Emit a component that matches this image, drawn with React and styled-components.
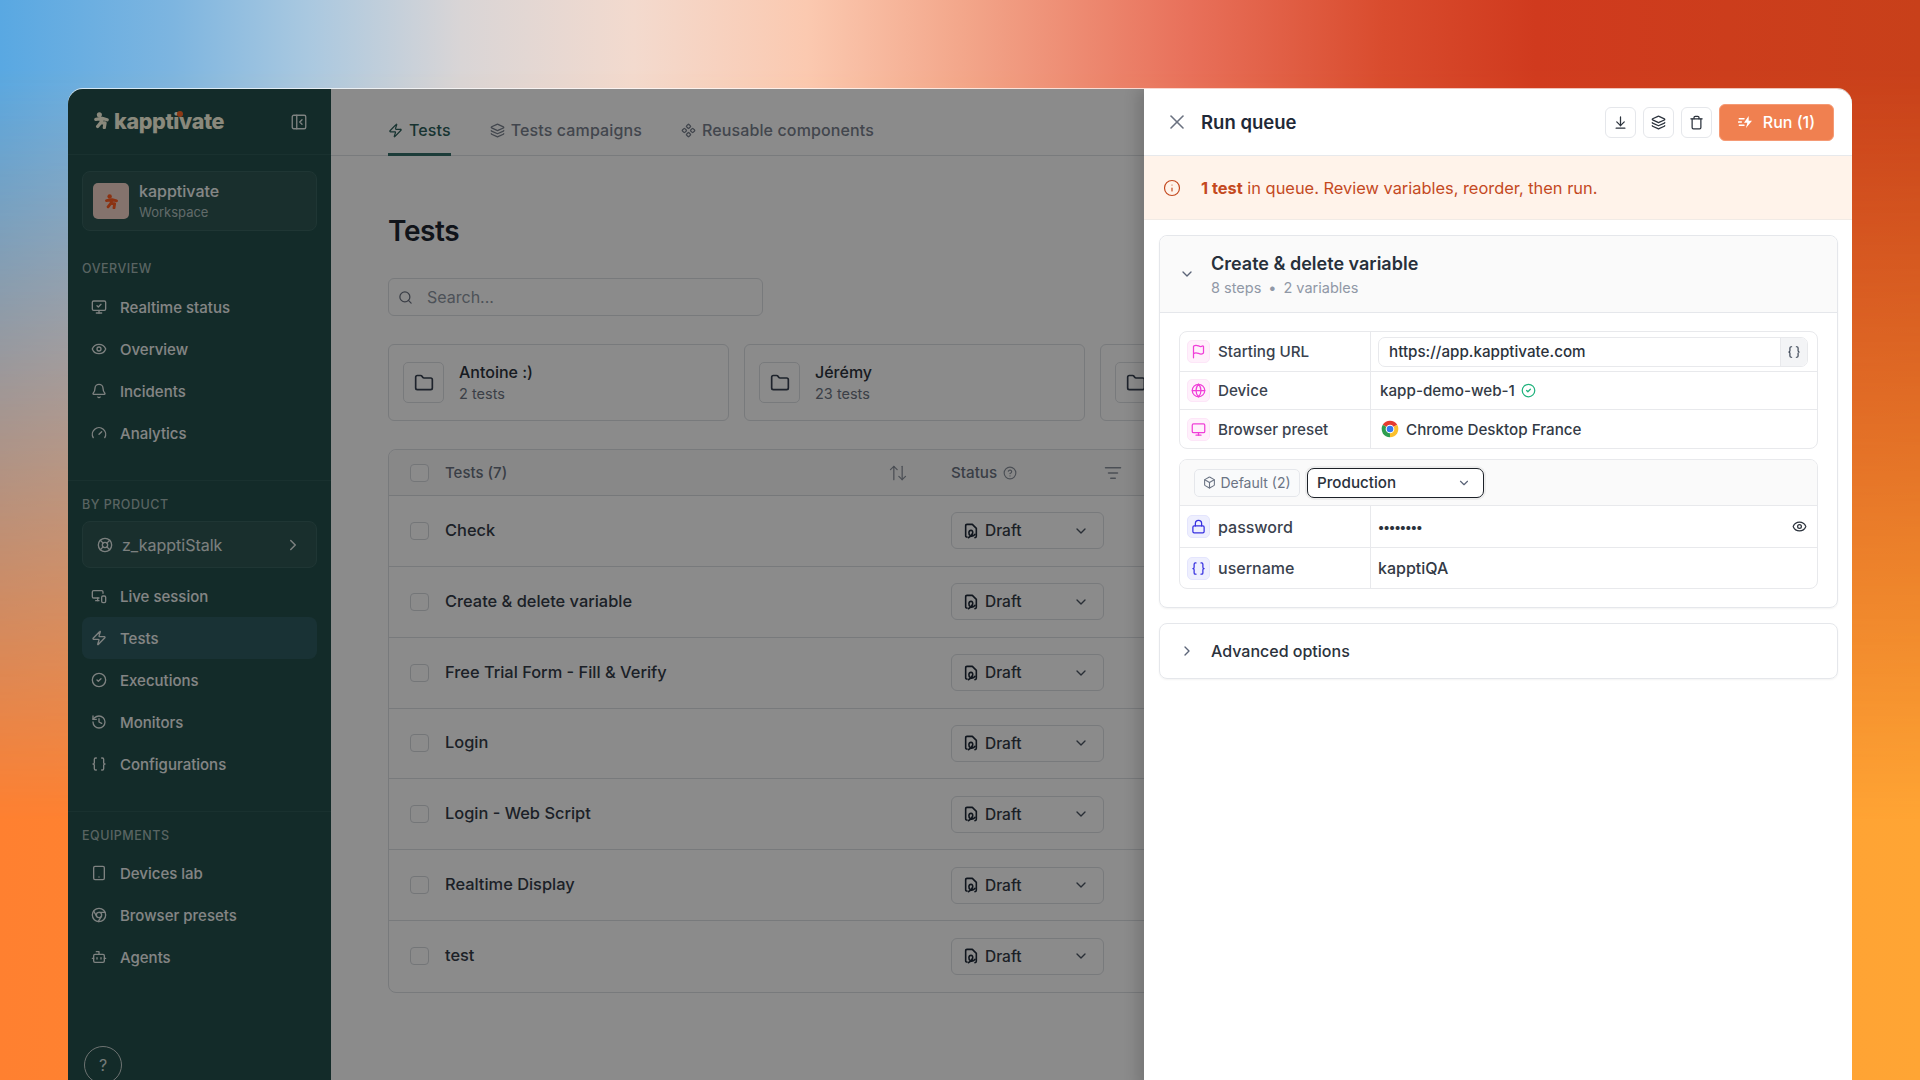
import React from 'react';
import styled, { createGlobalStyle } from 'styled-components';
import {
  ArrowDownToLine, ArrowUpDown, Bell, Bot, Box, Braces, ChevronDown, ChevronRight, Chrome, CircleCheck, CircleHelp,
  Component, Eye, Flag, Folder, Gauge, Globe, History, Info, Layers, LifeBuoy, ListFilter, Lock, Monitor, MonitorCheck,
  MonitorSmartphone, PanelLeftClose, Search, Tablet, Trash, X, Zap,
} from 'lucide-react';

const Global = createGlobalStyle`
  html, body { margin: 0; padding: 0; background: #ff8a30; }
  * { box-sizing: border-box; }
  body { font-family: Inter, "Noto Sans", "Liberation Sans", sans-serif; }
`;

const Stage = styled.div`
  position: relative;
  width: 1920px;
  height: 1080px;
  overflow: hidden;
  padding: 89px 68px 0;
  background: linear-gradient(90deg, #ff8030, #ffa534);
  &::before {
    content: '';
    position: absolute;
    inset: 0;
    background: linear-gradient(90deg, #59a8e2 0%, #7db5e0 9%, #a9c8e0 16%, #d9d5d6 24%, #f3dace 33%, #fbc9b0 42%, #f3a78b 50%, #e8705a 62%, #d94c2e 72%, #d03a1e 80%, #c8401a 100%);
    -webkit-mask-image: linear-gradient(180deg, #000 70px, transparent 820px);
    mask-image: linear-gradient(180deg, #000 70px, transparent 820px);
  }
`;

const Win = styled.div`
  position: relative;
  display: flex;
  height: 1000px;
  border-radius: 15px 15px 0 0;
  overflow: hidden;
  background: #fff;
  box-shadow: 0 -1px 0 rgba(255, 255, 255, 0.7);
`;

const Dim = styled.div`
  position: absolute;
  inset: 0;
  background: rgba(0, 0, 0, 0.455);
`;

const Side = styled.aside`
  width: 263px;
  flex: none;
  display: flex;
  flex-direction: column;
  background: #234f4b;
  color: #f0f4f3;
`;

const SideHead = styled.div`
  height: 66px;
  flex: none;
  display: flex;
  align-items: center;
  justify-content: space-between;
  padding: 0 23px 0 25px;
  border-bottom: 1px solid #2e5a56;
  color: #e8eeec;
`;

const Logo = styled.div`
  position: relative;
  display: flex;
  align-items: center;
  gap: 4px;
  font-weight: 800;
  font-size: 21.5px;
  line-height: 28px;
  letter-spacing: -0.35px;
  color: #fdfce4;
  padding-bottom: 2px;
`;

const LogoDot = styled.span`
  position: absolute;
  left: 84px;
  top: 4px;
  width: 6px;
  height: 6px;
  border-radius: 50%;
  background: #ff6a28;
`;

const SideBlock = styled.div`
  padding: 0 14px;
  flex: none;
  ${p => p.$rule && 'border-top: 1px solid #2e5a56;'}
  ${p => p.$rule && 'margin-top: 26px; padding-top: 16px;'}
`;

const Workspace = styled.div`
  margin-top: 16px;
  height: 60px;
  display: flex;
  align-items: center;
  gap: 10px;
  padding: 0 10px;
  background: #2f5754;
  border: 1px solid #3a6360;
  border-radius: 8px;
`;

const Avatar = styled.div`
  width: 36px;
  height: 36px;
  border-radius: 5px;
  background: #f2d4c8;
  display: flex;
  align-items: center;
  justify-content: center;
`;

const WsText = styled.div`
  display: flex;
  flex-direction: column;
  gap: 3px;
`;
const WsName = styled.div`
  font-size: 16px;
  line-height: 19px;
  font-weight: 500;
  color: #f4f7f6;
`;
const WsSub = styled.div`
  font-size: 13px;
  line-height: 16px;
  color: #b3c3c1;
`;

const SectionLabel = styled.div`
  font-size: 12.5px;
  line-height: 16px;
  font-weight: 500;
  letter-spacing: 0.5px;
  text-transform: uppercase;
  color: #a3b8b5;
  margin: ${p => p.$top || 0}px 0 ${p => p.$bottom || 8}px;
`;

const NavItem = styled.div`
  height: 42px;
  display: flex;
  align-items: center;
  gap: 13px;
  padding: 0 9px;
  border-radius: 8px;
  font-size: 15px;
  font-weight: 500;
  color: #f2f5f4;
  background: ${p => (p.$active ? '#2f5c61' : 'transparent')};
  svg { flex: none; color: #e8eeec; }
`;

const Product = styled.div`
  height: 47px;
  margin-bottom: 7px;
  display: flex;
  align-items: center;
  padding: 0 14px;
  gap: 9px;
  background: #2f5754;
  border: 1px solid #3a6360;
  border-radius: 8px;
  font-size: 16px;
  color: #e4ebe9;
  span { flex: 1; }
`;

const Help = styled.div`
  margin: 68px 0 0 16px;
  width: 38px;
  height: 38px;
  flex: none;
  border-radius: 50%;
  border: 1px solid #c9d3d1;
  display: flex;
  align-items: center;
  justify-content: center;
  font-size: 16px;
  color: #d8e0de;
`;

const Main = styled.main`
  flex: 1;
  min-width: 0;
  overflow: hidden;
  background: #fff;
`;

const Tabs = styled.div`
  height: 67px;
  display: flex;
  padding-left: 57px;
  gap: 39px;
  border-bottom: 1px solid #dfe2e6;
`;

const Tab = styled.div`
  display: flex;
  align-items: center;
  gap: 6px;
  height: 67px;
  font-size: 16px;
  font-weight: 500;
  letter-spacing: 0.12px;
  color: ${p => (p.$active ? '#2c5f5a' : '#79818e')};
  border-bottom: 3px solid ${p => (p.$active ? '#346f6a' : 'transparent')};
  padding-top: 18px;
`;

const Content = styled.div`
  padding-left: 57px;
  width: 1100px;
`;

const Title = styled.h1`
  margin: 58px 0 0;
  font-size: 28px;
  line-height: 34px;
  font-weight: 600;
  letter-spacing: -0.4px;
  color: #1f2630;
`;

const SearchBox = styled.div`
  margin-top: 30px;
  width: 375px;
  height: 38px;
  display: flex;
  align-items: center;
  gap: 14px;
  padding: 0 11px 0 9px;
  border: 1px solid #dde0e4;
  border-radius: 6px;
  font-size: 16px;
  color: #8e96a2;
  svg { color: #6b7280; }
`;

const Folders = styled.div`
  margin-top: 28px;
  display: flex;
  gap: 15px;
`;

const FolderCard = styled.div`
  width: 341px;
  height: 77px;
  flex: none;
  display: flex;
  align-items: center;
  gap: 15px;
  padding: 0 14px;
  border: 1px solid #dde0e4;
  border-radius: 6px;
`;

const FolderIcon = styled.div`
  width: 41px;
  height: 41px;
  flex: none;
  display: flex;
  align-items: center;
  justify-content: center;
  border: 1px solid #dde0e4;
  border-radius: 5px;
  color: #374151;
`;

const FolderName = styled.div`
  font-size: 16px;
  line-height: 20px;
  font-weight: 500;
  color: #2b323c;
`;
const FolderSub = styled.div`
  margin-top: 3px;
  font-size: 14.5px;
  line-height: 18px;
  color: #6d7582;
`;

const Table = styled.div`
  margin-top: 28px;
  width: 900px;
  border: 1px solid #dde0e4;
  border-radius: 8px;
`;

const Head = styled.div`
  height: 46px;
  display: grid;
  grid-template-columns: 19px 490px 171px;
  column-gap: 16px;
  align-items: center;
  padding-left: 21px;
  background: #fafafa;
  border-bottom: 1px solid #d9dce0;
  border-radius: 8px 8px 0 0;
  font-size: 15px;
  font-weight: 500;
  color: #6b7280;
`;

const HeadName = styled.div`
  display: flex;
  align-items: center;
  justify-content: space-between;
  padding-right: 27px;
`;

const HeadStatus = styled.div`
  display: flex;
  align-items: center;
  gap: 6px;
  font-size: 15.2px;
  span { flex: 1; }
`;

const Row = styled.div`
  height: 70.85px;
  display: grid;
  grid-template-columns: 19px 490px 153px;
  column-gap: 16px;
  align-items: center;
  padding-left: 21px;
  border-bottom: ${p => (p.$last ? 'none' : '1px solid #dde0e4')};
`;

const Check = styled.div`
  width: 19px;
  height: 18px;
  border: 1px solid #d5d8dd;
  border-radius: 4px;
  background: #fff;
`;

const RowName = styled.div`
  padding-bottom: 2px;
  font-size: 16.4px;
  font-weight: 500;
  color: #343c48;
`;

const Select = styled.div`
  height: 37px;
  display: flex;
  align-items: center;
  gap: 6px;
  padding: 0 14px 0 11px;
  border: 1px solid #dde0e4;
  border-radius: 6px;
  font-size: 15.5px;
  font-weight: 500;
  color: #343b46;
  span { flex: 1; }
`;

const Drawer = styled.section`
  position: absolute;
  top: 0;
  right: 0;
  bottom: 0;
  width: 708px;
  display: flex;
  flex-direction: column;
  background: #fff;
  box-shadow: -6px 0 14px rgba(0, 0, 0, 0.16);
`;

const DrawerHead = styled.header`
  height: 67px;
  flex: none;
  display: flex;
  align-items: center;
  padding: 0 18px 0 21px;
  border-bottom: 1px solid #e7e9ec;
`;

const CloseIcon = styled(X)`
  color: #6b7280;
  margin-right: 12px;
`;

const DrawerTitle = styled.h2`
  margin: 0;
  flex: 1;
  font-size: 18.5px;
  font-weight: 600;
  color: #1f2937;
`;

const IconBtn = styled.div`
  width: 31px;
  height: 31px;
  margin-right: 7px;
  display: flex;
  align-items: center;
  justify-content: center;
  border: 1px solid #e5e7eb;
  border-radius: 6px;
  color: #2b323c;
`;

const RunBtn = styled.div`
  width: 115px;
  height: 37px;
  display: flex;
  align-items: center;
  justify-content: center;
  gap: 9px;
  border: 1px solid #f59a75;
  border-radius: 6px;
  background: #f08050;
  color: #fff;
  font-size: 16px;
  font-weight: 500;
`;

const Banner = styled.div`
  height: 64px;
  flex: none;
  display: flex;
  align-items: center;
  gap: 20px;
  padding-left: 19px;
  background: #fff3ea;
  border-bottom: 1px solid #f1ebe6;
  font-size: 16.4px;
  color: #c4491f;
  b { font-weight: 700; }
`;

const DrawerBody = styled.div`
  padding: 15px 14px 15px 15px;
  display: flex;
  flex-direction: column;
  gap: 15px;
`;

const Card = styled.div`
  border: 1px solid #e5e7eb;
  border-radius: 8px;
  box-shadow: 0 1px 2px rgba(0, 0, 0, 0.05);
`;

const CardHead = styled.div`
  height: 77px;
  display: flex;
  align-items: center;
  gap: 16px;
  padding-left: 19px;
  background: #fafafa;
  border-bottom: 1px solid #e5e7eb;
  border-radius: 8px 8px 0 0;
  color: #5b6478;
`;

const CardTitle = styled.div`
  font-size: 18px;
  line-height: 24px;
  font-weight: 600;
  color: #27303b;
`;

const CardSub = styled.div`
  margin-top: 3px;
  font-size: 14.5px;
  line-height: 18px;
  color: #9098a6;
  display: flex;
  gap: 7px;
`;

const CardBody = styled.div`
  padding: 18px 19px 18px 19px;
  display: flex;
  flex-direction: column;
  gap: 10px;
`;

const Grid = styled.div`
  border: 1px solid #e8e9ec;
  border-radius: 8px;
  overflow: hidden;
`;

const GridRow = styled.div`
  height: ${p => p.$h || 39}px;
  display: grid;
  grid-template-columns: 191px 1fr;
  border-top: ${p => (p.$first ? 'none' : '1px solid #e8e9ec')};
`;

const Key = styled.div`
  display: flex;
  align-items: center;
  gap: 8px;
  padding-left: 7px;
  border-right: 1px solid #e8e9ec;
  font-size: ${p => (p.$big ? 16 : 15.2)}px;
  font-weight: 450;
  color: #3a424e;
`;

const KeyIcon = styled.div`
  width: 23px;
  height: 23px;
  flex: none;
  border-radius: 5px;
  display: flex;
  align-items: center;
  justify-content: center;
  border: 1px solid ${p => (p.$blue ? '#e4e5fd' : '#fde6f8')};
  background: ${p => (p.$blue ? '#eeeffe' : '#fff0fb')};
  color: ${p => (p.$blue ? '#3730e0' : '#f03fd8')};
`;

const Value = styled.div`
  display: flex;
  align-items: center;
  justify-content: space-between;
  padding: 0 10px 0 ${p => p.$pad || 7}px;
  font-size: ${p => (p.$big ? 16 : 15.2)}px;
  font-weight: 450;
  color: #333a45;
`;

const Inline = styled.div`
  display: flex;
  align-items: center;
  gap: ${p => p.$gap || 6}px;
`;

const UrlField = styled.div`
  flex: 1;
  height: 30px;
  display: flex;
  align-items: center;
  border: 1px solid #e8e9ec;
  border-radius: 7px;
  overflow: hidden;
  color: #2b323c;
  margin-right: -1px;
  span { flex: 1; padding-left: 10px; }
`;

const UrlAddon = styled.div`
  width: 27px;
  height: 100%;
  display: flex;
  align-items: center;
  justify-content: center;
  background: #f3f4f6;
  border-left: 1px solid #e8e9ec;
  color: #374151;
`;

const VarBar = styled.div`
  height: 45px;
  display: flex;
  align-items: center;
  gap: 7px;
  padding-left: 14px;
  background: #fafafa;
`;

const Chip = styled.div`
  height: 28px;
  width: 106px;
  display: flex;
  align-items: center;
  justify-content: center;
  gap: 4px;
  border: 1px solid #e5e7eb;
  border-radius: 5px;
  background: #f9fafb;
  font-size: 14px;
  color: #6b7484;
`;

const Env = styled.div`
  width: 177px;
  height: 30px;
  display: flex;
  align-items: center;
  justify-content: space-between;
  padding: 0 12px 0 9px;
  border: 1px solid #1c2128;
  border-radius: 7px;
  background: #fff;
  box-shadow: 0 0 0 2px rgba(0, 0, 0, 0.05);
  font-size: 15.2px;
  font-weight: 450;
  color: #2b323c;
  svg { color: #5b6478; }
`;

const Dots = styled.span`
  font-size: 13px;
  font-weight: 700;
  letter-spacing: -0.7px;
  color: #2b323c;
`;

const AdvCard = styled(Card)`
  height: 56px;
  display: flex;
  align-items: center;
  gap: 16px;
  padding-left: 19px;
  color: #5b6478;
  font-size: 16px;
  font-weight: 500;
`;

const AdvText = styled.span`
  color: #2b323c;
`;

const Figure = ({ size = 20, color = 'currentColor', style }) => (
  <svg width={size} height={size} viewBox="0 0 24 24" fill="none" style={style}>
    <circle cx="9" cy="4" r="3.6" fill={color} />
    <path d="M4 10.5 L13 9 L20 11 M13 9 L11 15 L17 15.5 L16 22 M11 15 L6.5 20.5" stroke={color} strokeWidth="4.6" strokeLinecap="round" strokeLinejoin="round" />
  </svg>
);

const RunIcon = () => (
  <svg width="16" height="16" viewBox="0 0 24 24" fill="none">
    <path d="M16 3 L9 13 h5 l-2 8 L21 10 h-5 z" fill="#fff" />
    <path d="M2 7h7 M1 12h4 M2 17h7" stroke="#fff" strokeWidth="2.2" strokeLinecap="round" />
  </svg>
);

const DraftIcon = () => (
  <svg width="16" height="16" viewBox="0 0 24 24" fill="none" stroke="#1f2937" strokeWidth="2.4" strokeLinecap="round" strokeLinejoin="round">
    <path d="M6 21 Q4 21 4 19 V4 Q4 2 6 2 H14 L20 8 V20 Q20 22 18 22" />
    <path d="M8 22 C16 18 16 11 12 11 C8 11 8 17 11 19 C14 21 16 19 18 17" />
  </svg>
);

const ChromeLogo = () => (
  <svg width="20" height="20" viewBox="0 0 24 24">
    <path d="M12 12 L3.34 7 A10 10 0 0 1 20.66 7 Z" fill="#e53b30" />
    <path d="M12 12 L20.66 7 A10 10 0 0 1 12 22 Z" fill="#fbc02d" />
    <path d="M12 12 L12 22 A10 10 0 0 1 3.34 7 Z" fill="#2e9e4f" />
    <circle cx="12" cy="12" r="5.2" fill="#fff" />
    <circle cx="12" cy="12" r="4" fill="#3478f0" />
  </svg>
);

const overview = [[MonitorCheck, 'Realtime status'], [Eye, 'Overview'], [Bell, 'Incidents'], [Gauge, 'Analytics']];
const product = [[MonitorSmartphone, 'Live session'], [Zap, 'Tests'], [CircleCheck, 'Executions'], [History, 'Monitors'], [Braces, 'Configurations']];
const equip = [[Tablet, 'Devices lab'], [Chrome, 'Browser presets'], [Bot, 'Agents']];
const tests = ['Check', 'Create & delete variable', 'Free Trial Form - Fill & Verify', 'Login', 'Login - Web Script', 'Realtime Display', 'test'];

const Nav = ({ items, active }) => items.map(([I, t]) => (
  <NavItem key={t} $active={t === active}><I size={16} strokeWidth={2} />{t}</NavItem>
));

export default function App() {
  return (
    <Stage>
      <Global />
      <Win>
        <Side>
          <SideHead>
            <Logo>
              <Figure size={17} />
              kapptivate
              <LogoDot />
            </Logo>
            <PanelLeftClose size={18} strokeWidth={1.8} />
          </SideHead>
          <SideBlock>
            <Workspace>
              <Avatar><Figure size={15} color="#ff5c22" /></Avatar>
              <WsText>
                <WsName>kapptivate</WsName>
                <WsSub>Workspace</WsSub>
              </WsText>
            </Workspace>
            <SectionLabel $top={30} $bottom={9}>Overview</SectionLabel>
            <Nav items={overview} />
          </SideBlock>
          <SideBlock $rule>
            <SectionLabel>By product</SectionLabel>
            <Product>
              <LifeBuoy size={16} />
              <span>z_kapptiStalk</span>
              <ChevronRight size={18} />
            </Product>
            <Nav items={product} active="Tests" />
          </SideBlock>
          <SideBlock $rule>
            <SectionLabel>Equipments</SectionLabel>
            <Nav items={equip} />
          </SideBlock>
          <Help>?</Help>
        </Side>
        <Main>
          <Tabs>
            <Tab $active><Zap size={15} />Tests</Tab>
            <Tab><Layers size={15} />Tests campaigns</Tab>
            <Tab><Component size={15} />Reusable components</Tab>
          </Tabs>
          <Content>
            <Title>Tests</Title>
            <SearchBox><Search size={15} />Search...</SearchBox>
            <Folders>
              <FolderCard>
                <FolderIcon><Folder size={20} /></FolderIcon>
                <div><FolderName>Antoine :)</FolderName><FolderSub>2 tests</FolderSub></div>
              </FolderCard>
              <FolderCard>
                <FolderIcon><Folder size={20} /></FolderIcon>
                <div><FolderName>Jérémy</FolderName><FolderSub>23 tests</FolderSub></div>
              </FolderCard>
              <FolderCard>
                <FolderIcon><Folder size={20} /></FolderIcon>
              </FolderCard>
            </Folders>
            <Table>
              <Head>
                <Check />
                <HeadName>Tests (7)<ArrowUpDown size={20} strokeWidth={1.5} color="#8a919c" /></HeadName>
                <HeadStatus>Status<CircleHelp size={14} color="#8a919c" /><span /><ListFilter size={18} color="#8a919c" /></HeadStatus>
              </Head>
              {tests.map((t, i) => (
                <Row key={t} $last={i === tests.length - 1}>
                  <Check />
                  <RowName>{t}</RowName>
                  <Select><DraftIcon /><span>Draft</span><ChevronDown size={16} color="#4b5563" /></Select>
                </Row>
              ))}
            </Table>
          </Content>
        </Main>
        <Dim />
        <Drawer>
          <DrawerHead>
            <CloseIcon size={24} strokeWidth={1.6} />
            <DrawerTitle>Run queue</DrawerTitle>
            <IconBtn><ArrowDownToLine size={15} /></IconBtn>
            <IconBtn><Layers size={15} /></IconBtn>
            <IconBtn><Trash size={15} /></IconBtn>
            <RunBtn><RunIcon />Run (1)</RunBtn>
          </DrawerHead>
          <Banner>
            <Info size={18} strokeWidth={1.6} />
            <div><b>1 test</b> in queue. Review variables, reorder, then run.</div>
          </Banner>
          <DrawerBody>
            <Card>
              <CardHead>
                <ChevronDown size={16} />
                <div>
                  <CardTitle>Create &amp; delete variable</CardTitle>
                  <CardSub><span>8 steps</span><span>•</span><span>2 variables</span></CardSub>
                </div>
              </CardHead>
              <CardBody>
                <Grid>
                  <GridRow $first>
                    <Key><KeyIcon><Flag size={15} /></KeyIcon>Starting URL</Key>
                    <Value><UrlField><span>https://app.kapptivate.com</span><UrlAddon><Braces size={14} /></UrlAddon></UrlField></Value>
                  </GridRow>
                  <GridRow $h={38}>
                    <Key><KeyIcon><Globe size={15} /></KeyIcon>Device</Key>
                    <Value $pad={9}><Inline>kapp-demo-web-1<CircleCheck size={15} color="#22b37e" /></Inline></Value>
                  </GridRow>
                  <GridRow>
                    <Key><KeyIcon><Monitor size={15} /></KeyIcon>Browser preset</Key>
                    <Value $pad={9}><Inline $gap={6}><ChromeLogo />Chrome Desktop France</Inline></Value>
                  </GridRow>
                </Grid>
                <Grid>
                  <VarBar>
                    <Chip><Box size={13} />Default (2)</Chip>
                    <Env>Production<ChevronDown size={14} /></Env>
                  </VarBar>
                  <GridRow $h={42}>
                    <Key $big><KeyIcon $blue><Lock size={15} /></KeyIcon>password</Key>
                    <Value $big><Dots>••••••••</Dots><Eye size={15} color="#2b323c" /></Value>
                  </GridRow>
                  <GridRow $h={41}>
                    <Key $big><KeyIcon $blue><Braces size={15} /></KeyIcon>username</Key>
                    <Value $big>kapptiQA</Value>
                  </GridRow>
                </Grid>
              </CardBody>
            </Card>
            <AdvCard>
              <ChevronRight size={16} />
              <AdvText>Advanced options</AdvText>
            </AdvCard>
          </DrawerBody>
        </Drawer>
      </Win>
    </Stage>
  );
}
